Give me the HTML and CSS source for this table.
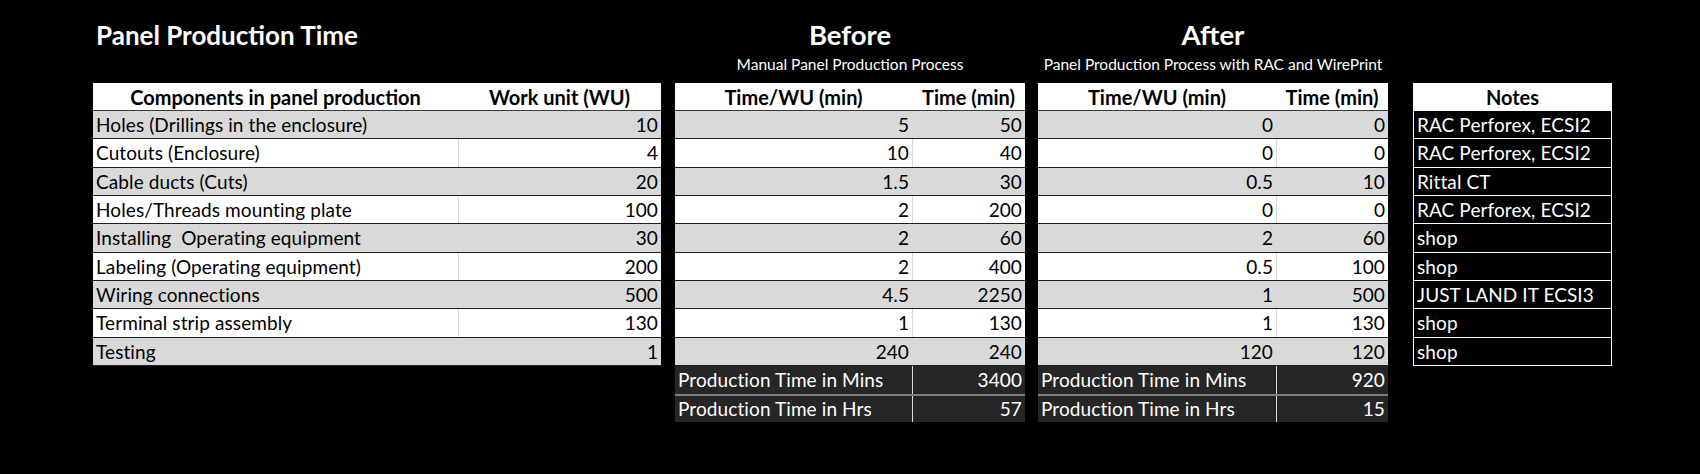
FILE: index.html
```html
<!DOCTYPE html>
<html lang="en">
<head>
<meta charset="utf-8">
<title>Panel Production Time</title>
<link rel="stylesheet" href="styles.css">
</head>
<body>
<div class="sheet">
  <div class="block block-main">
    <div class="head-title">Panel Production Time</div>
    <div class="head-sub"></div>
    <div class="table t-main">
      <div class="row hdr"><div class="c ctr">Components in panel production</div><div class="c ctr">Work unit (WU)</div></div>
      <div class="row g"><div class="c">Holes (Drillings in the enclosure)</div><div class="c num">10</div></div>
      <div class="row w"><div class="c">Cutouts (Enclosure)</div><div class="c num">4</div></div>
      <div class="row g"><div class="c">Cable ducts (Cuts)</div><div class="c num">20</div></div>
      <div class="row w"><div class="c">Holes/Threads mounting plate</div><div class="c num">100</div></div>
      <div class="row g"><div class="c">Installing&nbsp; Operating equipment</div><div class="c num">30</div></div>
      <div class="row w"><div class="c">Labeling (Operating equipment)</div><div class="c num">200</div></div>
      <div class="row g"><div class="c">Wiring connections</div><div class="c num">500</div></div>
      <div class="row w"><div class="c">Terminal strip assembly</div><div class="c num">130</div></div>
      <div class="row g"><div class="c">Testing</div><div class="c num">1</div></div>
    </div>
  </div>

  <div class="block block-before">
    <div class="head-title big ctr">Before</div>
    <div class="head-sub ctr">Manual Panel Production Process</div>
    <div class="table t-before">
      <div class="row hdr"><div class="c ctr">Time/WU (min)</div><div class="c ctr">Time (min)</div></div>
      <div class="row g"><div class="c num">5</div><div class="c num">50</div></div>
      <div class="row w"><div class="c num">10</div><div class="c num">40</div></div>
      <div class="row g"><div class="c num">1.5</div><div class="c num">30</div></div>
      <div class="row w"><div class="c num">2</div><div class="c num">200</div></div>
      <div class="row g"><div class="c num">2</div><div class="c num">60</div></div>
      <div class="row w"><div class="c num">2</div><div class="c num">400</div></div>
      <div class="row g"><div class="c num">4.5</div><div class="c num">2250</div></div>
      <div class="row w"><div class="c num">1</div><div class="c num">130</div></div>
      <div class="row g"><div class="c num">240</div><div class="c num">240</div></div>
      <div class="row sum"><div class="c">Production Time in Mins</div><div class="c num">3400</div></div>
      <div class="row sum sum2"><div class="c">Production Time in Hrs</div><div class="c num">57</div></div>
    </div>
  </div>

  <div class="block block-after">
    <div class="head-title big ctr">After</div>
    <div class="head-sub ctr">Panel Production Process with RAC and WirePrint</div>
    <div class="table t-after">
      <div class="row hdr"><div class="c ctr">Time/WU (min)</div><div class="c ctr">Time (min)</div></div>
      <div class="row g"><div class="c num">0</div><div class="c num">0</div></div>
      <div class="row w"><div class="c num">0</div><div class="c num">0</div></div>
      <div class="row g"><div class="c num">0.5</div><div class="c num">10</div></div>
      <div class="row w"><div class="c num">0</div><div class="c num">0</div></div>
      <div class="row g"><div class="c num">2</div><div class="c num">60</div></div>
      <div class="row w"><div class="c num">0.5</div><div class="c num">100</div></div>
      <div class="row g"><div class="c num">1</div><div class="c num">500</div></div>
      <div class="row w"><div class="c num">1</div><div class="c num">130</div></div>
      <div class="row g"><div class="c num">120</div><div class="c num">120</div></div>
      <div class="row sum"><div class="c">Production Time in Mins</div><div class="c num">920</div></div>
      <div class="row sum sum2"><div class="c">Production Time in Hrs</div><div class="c num">15</div></div>
    </div>
  </div>

  <div class="block block-notes">
    <div class="head-title"></div>
    <div class="head-sub"></div>
    <div class="table t-notes">
      <div class="row hdr"><div class="c ctr">Notes</div></div>
      <div class="row n"><div class="c">RAC Perforex, ECSI2</div></div>
      <div class="row n"><div class="c">RAC Perforex, ECSI2</div></div>
      <div class="row n"><div class="c">Rittal CT</div></div>
      <div class="row n"><div class="c">RAC Perforex, ECSI2</div></div>
      <div class="row n"><div class="c">shop</div></div>
      <div class="row n"><div class="c">shop</div></div>
      <div class="row n"><div class="c">JUST LAND IT ECSI3</div></div>
      <div class="row n"><div class="c">shop</div></div>
      <div class="row n"><div class="c">shop</div></div>
    </div>
  </div>
</div>
</body>
</html>
```

FILE: styles.css
```css
html, body {
  margin: 0;
  padding: 0;
  background: #000;
}

body {
  width: 1700px;
  height: 474px;
  overflow: hidden;
  font-family: Lato, "Liberation Sans", sans-serif;
  color: #000;
}

.sheet {
  display: flex;
  align-items: flex-start;
  padding-left: 93px;
}

.block {
  display: flex;
  flex-direction: column;
}

.block-main { width: 568px; }
.block-before { width: 350px; margin-left: 14px; }
.block-after { width: 350px; margin-left: 13px; }
.block-notes { width: 199px; margin-left: 25px; }

.head-title {
  height: 52px;
  box-sizing: border-box;
  padding-top: 21px;
  color: #fff;
  font-weight: 700;
  font-size: 26px;
  line-height: 28px;
  padding-left: 3px;
  white-space: nowrap;
}

.head-title.big {
  font-size: 27.5px;
}

.head-sub {
  height: 31px;
  color: #fff;
  font-size: 15.5px;
  line-height: 18px;
  padding-top: 3px;
  box-sizing: border-box;
  white-space: nowrap;
}

.ctr { text-align: center; }
.head-title.ctr { padding-left: 0; }

.table {
  display: flex;
  flex-direction: column;
}

.row {
  display: grid;
  height: 28.33px;
  box-sizing: border-box;
  border-bottom: 1px solid #1e1e1e;
  font-size: 19px;
  letter-spacing: 0.1px;
  line-height: 28px;
}

.t-main .row { grid-template-columns: 365px 203px; }
.t-before .row { grid-template-columns: 237px 113px; }
.t-after .row { grid-template-columns: 238px 112px; }
.t-notes .row { grid-template-columns: 1fr; }

.row.hdr {
  height: 28px;
  background: #fff;
  font-weight: 700;
  font-size: 20px;
  letter-spacing: 0;
  border-bottom: 1px solid #3a3a3a;
}

.row.g { background: #d9d9d9; }
.row.w { background: #fff; }

.c {
  padding: 0 3px;
  white-space: nowrap;
  overflow: hidden;
}

.row .c + .c { border-left: 1px solid #d9d9d9; }
.row.hdr .c + .c { border-left: none; }

.num { text-align: right; }

.row.sum {
  height: 28px;
  background: #262626;
  color: #fff;
  border-bottom: none;
}

.row.sum .c + .c { border-left: 1px solid #d9d9d9; }

.row.sum2 {
  border-top: 2px solid #7f7f7f;
  line-height: 26px;
}

.t-notes {
  border-left: 1px solid #fff;
  border-right: 1px solid #fff;
}

.row.n {
  background: #000;
  color: #fff;
  border-bottom: 1px solid #fff;
}

.t-notes .row.hdr {
  border-bottom: 1px solid #fff;
}
```
